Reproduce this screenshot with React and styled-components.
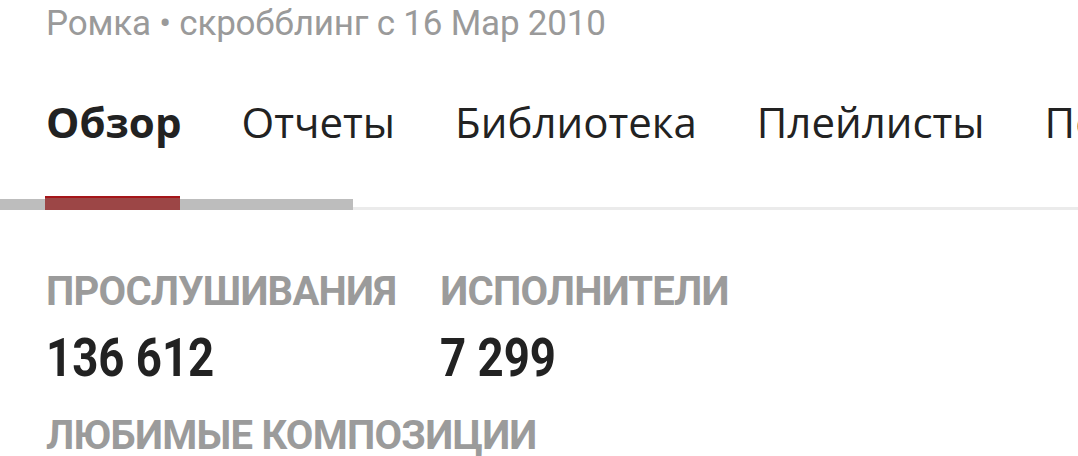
import styled, { createGlobalStyle } from "styled-components";

const GlobalStyle = createGlobalStyle`
  html, body {
    margin: 0;
    padding: 0;
    background: #fff;
    overflow: hidden;
  }
`;

const Page = styled.div`
  width: 1078px;
  height: 456px;
  overflow: hidden;
`;

const Subtitle = styled.div`
  font-family: Roboto, sans-serif;
  padding: 2px 0 0 46px;
  font-size: 35px;
  line-height: 44px;
  letter-spacing: -0.2px;
  color: #9a9a9a;
  white-space: nowrap;
`;

const Tabs = styled.nav`
  display: flex;
  gap: 60px;
  padding: 0 0 0 46px;
  margin-top: 48px;
  white-space: nowrap;
`;

const Tab = styled.div`
  font-family: "Open Sans", sans-serif;
  font-size: 42px;
  line-height: 56px;
  color: #222;
  font-weight: ${(p) => (p.$active ? 700 : 400)};
`;

const Track = styled.div`
  position: relative;
  height: 14px;
  margin-top: 46px;
`;

const TrackLine = styled.div`
  position: absolute;
  left: 0;
  right: 0;
  bottom: 0;
  height: 3px;
  background: #ebebeb;
`;

const TrackScroll = styled.div`
  position: absolute;
  left: 0;
  width: 353px;
  bottom: 0;
  height: 11px;
  background: #bdbdbd;
`;

const TrackActive = styled.div`
  position: absolute;
  left: 45px;
  width: 135px;
  bottom: 0;
  height: 14px;
  background: #9c4646;
  border-top: 2px solid #a5161a;
  box-sizing: border-box;
`;

const Stats = styled.div`
  display: flex;
  gap: 44px;
  padding: 62px 0 0 46px;
`;

const Stat = styled.div`
  display: flex;
  flex-direction: column;
  align-items: flex-start;
`;

const Label = styled.div`
  font-family: Roboto, sans-serif;
  font-weight: 700;
  font-size: 40px;
  line-height: 40px;
  letter-spacing: -0.75px;
  color: #9b9b9b;
  white-space: nowrap;
`;

const Value = styled.div`
  font-family: Roboto, sans-serif;
  font-weight: 700;
  font-size: 53px;
  line-height: 56px;
  margin-top: 18px;
  color: #222;
  white-space: nowrap;
  transform: scaleX(0.86);
  transform-origin: left center;
`;

const Favourites = styled(Label)`
  padding: 30px 0 0 46px;
`;

export default function App() {
  return (
    <Page>
      <GlobalStyle />
      <Subtitle>Ромка • скробблинг с 16 Мар 2010</Subtitle>
      <Tabs>
        <Tab $active>Обзор</Tab>
        <Tab>Отчеты</Tab>
        <Tab>Библиотека</Tab>
        <Tab>Плейлисты</Tab>
        <Tab>Подписки</Tab>
      </Tabs>
      <Track>
        <TrackLine />
        <TrackScroll />
        <TrackActive />
      </Track>
      <Stats>
        <Stat>
          <Label>ПРОСЛУШИВАНИЯ</Label>
          <Value>136 612</Value>
        </Stat>
        <Stat>
          <Label>ИСПОЛНИТЕЛИ</Label>
          <Value>7 299</Value>
        </Stat>
      </Stats>
      <Favourites>ЛЮБИМЫЕ КОМПОЗИЦИИ</Favourites>
    </Page>
  );
}
